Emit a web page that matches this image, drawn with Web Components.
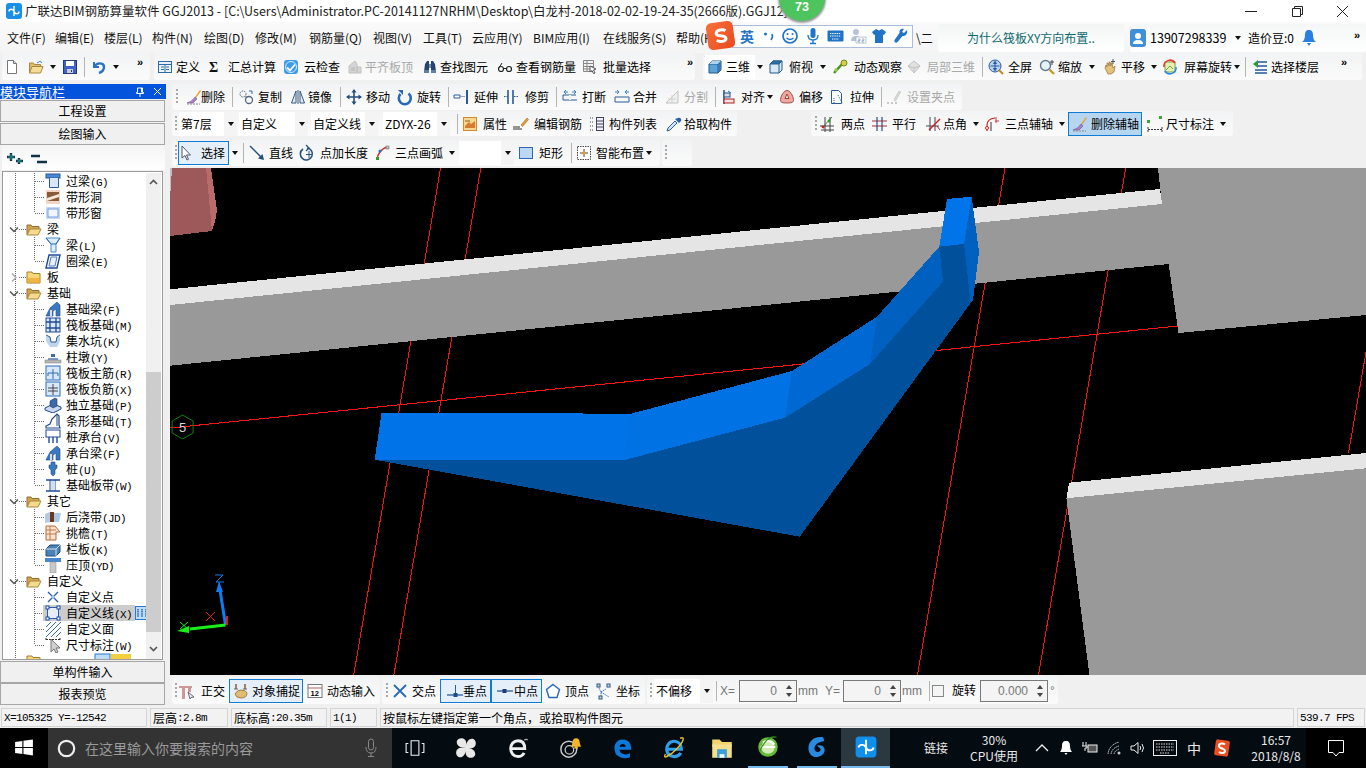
<!DOCTYPE html>
<html lang="zh"><head><meta charset="utf-8"><title>GGJ2013</title>
<style>
html,body{margin:0;padding:0;width:1366px;height:768px;overflow:hidden;background:#f0f0f0;font:12px/16px "Noto Sans CJK SC","Liberation Sans",sans-serif;color:#000}
</style></head><body><gj-app></gj-app>
<script>
const I={
new:'<path d="M3.5 1.5h6l3 3v10h-9z" fill="#fff" stroke="#777"/><path d="M9.5 1.5v3h3" fill="#ddd" stroke="#777"/>',
open:'<path d="M1.5 14v-10h4l1 1.5h6v2" fill="#dcb868" stroke="#a98a40"/><path d="M1.5 14l2.5-6.5h11L12.5 14z" fill="#f5dc98" stroke="#a98a40"/><path d="M9 4q3-3 5-.5" fill="none" stroke="#3a7fd0"/>',
save:'<rect x="1.5" y="1.5" width="13" height="13" fill="#3f62c4" stroke="#22387a"/><rect x="4" y="2" width="8" height="5" fill="#fff"/><rect x="5" y="10" width="6" height="4" fill="#c8d0e0"/><rect x="9" y="11" width="1" height="2" fill="#334"/>',
undo:'<path d="M3 3v5h5" fill="none" stroke="#2a72c8" stroke-width="2"/><path d="M3.5 7.5C6 3 13 3.500 13 8c0 3-2 5-5 6" fill="none" stroke="#2a72c8" stroke-width="2.400"/>',
def:'<rect x="1.500" y="2.500" width="13" height="11" fill="#eaf2fb" stroke="#2c6aa8"/><path d="M1.500 5.500h13M4 8h3M4 10.500h3M9 8h3M9 10.500h3M8 5.500v8" stroke="#2c6aa8" fill="none"/>',
sigma:'<text x="2" y="13" font-size="14" font-weight="700" font-family="Liberation Serif,serif" fill="#111">Σ</text>',
cloud:'<rect x="1" y="1" width="14" height="14" rx="3" fill="#3f9be8"/><path d="M4 8.500l3 3 5-6" fill="none" stroke="#fff" stroke-width="1.800"/><circle cx="8" cy="8" r="5.500" fill="none" stroke="#d8ecfb"/>',
flat:'<path d="M2 14V7l6-5 2 3v9zM10 14V8h4v6z" fill="#d0d0d0" stroke="#b8b8b8"/><path d="M4 9h4M4 11h4" stroke="#aaa"/>',
binoc:'<path d="M2 13l1-8 2-3h2v11zM9 13V2h2l2 3 1 8z" fill="#27446e"/><rect x="7" y="5" width="2" height="4" fill="#7b8ca8"/><rect x="2" y="11" width="5" height="3" fill="#5f7ea8"/><rect x="9" y="11" width="5" height="3" fill="#5f7ea8"/>',
glass:'<circle cx="4" cy="10" r="2.500" fill="none" stroke="#222" stroke-width="1.200"/><circle cx="12" cy="10" r="2.500" fill="none" stroke="#222" stroke-width="1.200"/><path d="M6 9.500h3.500M1.500 9.500L5 4" fill="none" stroke="#222"/>',
batch:'<path d="M1.500 1.500h10v11h-10zM1.500 4.500h10M1.500 7.500h10M1.500 10h10M5 1.500v11" fill="#f2f2f2" stroke="#888"/><path d="M8 7l6 3-2.500 1 1.500 3-1.500.5-1.500-3-2 1.500z" fill="#fff" stroke="#555"/>',
cube:'<path d="M2 5l3-3h9v9l-3 3H2z" fill="#5aa2d8" stroke="#235a8c"/><path d="M2 5h9v9M11 5l3-3" fill="none" stroke="#235a8c"/><path d="M2 5l3-3h9l-3 3z" fill="#a8d4f0"/><path d="M11 5l3-3v9l-3 3z" fill="#3a7ab0"/>',
top:'<path d="M2 5l3-3h9v9l-3 3H2z" fill="#d8e8f5" stroke="#235a8c"/><path d="M2 5l3-3h9l-3 3z" fill="#2f6fb0" stroke="#235a8c"/><path d="M11 5v9" stroke="#235a8c"/>',
orbit:'<path d="M2 14L11 4" stroke="#4d8f1d" stroke-width="2.500"/><circle cx="12" cy="4" r="3" fill="#d8d040" stroke="#6b8a1a"/><circle cx="4" cy="11" r="1.800" fill="#8fcf4a"/>',
local:'<path d="M2 7l6-5 6 5-6 7z" fill="#dedede" stroke="#bbb"/><path d="M2 7l6 2 6-2M8 9v5" fill="none" stroke="#bbb"/>',
full:'<circle cx="7" cy="7" r="6" fill="#b9d4ef" stroke="#2a5aa0"/><path d="M7 2.500v9M2.500 7h9M7 2.500L5.500 4.500h3zM7 11.500L5.500 9.500h3z" fill="#2a5aa0" stroke="#2a5aa0"/><path d="M11 11l4 4" stroke="#c08a20" stroke-width="2"/>',
zoom:'<circle cx="6.500" cy="6.500" r="5" fill="#e8f0fa" stroke="#607890" stroke-width="1.400"/><path d="M10.500 10.500l4.500 4.500" stroke="#c09a30" stroke-width="2.400"/><path d="M13 1v5M11 3h4" stroke="#444"/>',
pan:'<path d="M3 9l1-3 1 2V4l1 0 1 3V3l1 0 1 4V4h1l1 5 2-2-1 6-3 2H6z" fill="#e3c27a" stroke="#95703a" stroke-width=".7"/><path d="M11 0v5M9 2.500h4" stroke="#555"/>',
rot:'<rect x="3" y="3" width="10" height="10" fill="#e6f0b0" stroke="#80a060"/><path d="M4 11l4-4 3 3" fill="none" stroke="#6aa840"/><path d="M2 8a6 6 0 0 1 11-4" fill="none" stroke="#e03a2a" stroke-width="1.500"/><path d="M14 8a6 6 0 0 1-11 4" fill="none" stroke="#2a8ae0" stroke-width="1.500"/>',
floor:'<path d="M6 3h9M6 7h9M3 11h12M3 14h12" stroke="#225a9a" stroke-width="1.500"/><path d="M6 1L1 5l5 4z" fill="#2a9a3a"/>',
del:'<path d="M9 8L14 1l1 1-5 7z" fill="#e8a030"/><path d="M9 8l2 2-4 4H1q5-1 8-6z" fill="#a880c8" stroke="#705090" stroke-width=".6"/><path d="M1 15h13" stroke="#888" stroke-dasharray="2 1"/>',
copy:'<circle cx="5" cy="5" r="3" fill="none" stroke="#567" stroke-dasharray="1.500 1"/><circle cx="11" cy="11" r="3.500" fill="none" stroke="#567" stroke-width="1.300"/><path d="M7 8l2 0" stroke="#567"/><path d="M11 2h3v3" fill="none" stroke="#2a6ab0"/>',
mirror:'<path d="M1.500 14L6 2v12zM14.500 14L10 2v12z" fill="#e4ecf4" stroke="#345a80"/><path d="M8 1v14" stroke="#345a80"/>',
move:'<path d="M8 1v14M1 8h14" stroke="#23507e" stroke-width="1.600"/><path d="M8 0L5.500 3.500h5zM8 16l-2.500-3.500h5zM0 8l3.500-2.500v5zM16 8l-3.500-2.500v5z" fill="#23507e"/>',
turn:'<path d="M12.500 4.500a6 6 0 1 1-8 .5" fill="none" stroke="#2a68b8" stroke-width="2.600"/><path d="M2 1h5v5z" fill="#2a68b8"/>',
ext:'<path d="M1 6h6v3H1z" fill="#fff" stroke="#2a5a98"/><path d="M8.500 7.500h3" stroke="#2a5a98" stroke-dasharray="1 1"/><path d="M14 1v14" stroke="#2a5a98" stroke-width="2"/>',
trim:'<path d="M5 1v14M10 1v14" stroke="#2a5a98" stroke-width="1.600"/><path d="M1 7.500h4M11 7.500h4" stroke="#2a5a98" stroke-dasharray="1.500 1"/>',
brk:'<path d="M1 6h13M1 6v5h14" fill="none" stroke="#2a5a98"/><path d="M2 3h4M2 3l2-2M2 3l2 2M14 3h-4M14 3l-2-2M14 3l-2 2" fill="none" stroke="#3a80c0"/><path d="M8 6v5" stroke="#f0f0f0" stroke-width="2"/>',
mrg:'<path d="M1 8h14M1 13h14" fill="none" stroke="#2a5a98"/><path d="M1 3h4M5 3L3 1M5 3L3 5M15 3h-4M11 3l2-2M11 3l2 2" fill="none" stroke="#3a80c0"/><path d="M1 8v5M15 8v5" stroke="#2a5a98"/>',
spl:'<path d="M2 14L14 2v12z" fill="#eee" stroke="#bbb"/><path d="M4 10h8M8 6v8" stroke="#ccc"/>',
align:'<path d="M4 1v14" stroke="#23508e" stroke-width="1.500"/><rect x="4" y="4" width="6" height="4" fill="#ddd" stroke="#23508e"/><rect x="4" y="10" width="10" height="4" fill="#f4dede" stroke="#b02020"/><path d="M8 2l3 2" stroke="#2a70c0"/>',
off:'<path d="M8 1.500c3 0 6 5 6.500 9 .3 3-2 3.500-6.500 3.500s-6.800-.5-6.500-3.500C2 6.500 5 1.500 8 1.500z" fill="#eda9a0" stroke="#a04a4a"/><path d="M6 9.500L8 5l2 4.500z" fill="#fff" stroke="#b03a3a"/>',
str:'<path d="M2.500 1.500h7l3 3v10h-10z" fill="#fff" stroke="#2a5a98"/><path d="M9 6l4 8M5 14l0-6" stroke="#2a5a98" stroke-dasharray="1 1"/>',
grip:'<path d="M8 11l5-9 1.500 1-5 9z" fill="#ddd" stroke="#c0c0c0"/><path d="M1 14h2M5 14h2M9 14h2" stroke="#aaa" stroke-width="1.500"/>',
attr:'<rect x="1.500" y="1.500" width="13" height="13" fill="#f8d890" stroke="#d08a30"/><path d="M3 10l4-4 2 2 4-3v7H3z" fill="#d87a30"/><path d="M3 5h5" stroke="#806020"/>',
edit:'<path d="M8 9l6-7 1.500 1.500-6 7z" fill="#e8a030" stroke="#805a18" stroke-width=".5"/><path d="M0 11h7M0 13h9" stroke="#333" stroke-width="1.200"/>',
list:'<path d="M1 2h3M1 6h3M1 10h3M1 14h3" stroke="#444" stroke-dasharray="1 1"/><rect x="7.500" y="1.500" width="7" height="13" fill="#eef" stroke="#445"/><path d="M7.500 5h7M7.500 8h7M7.500 11h7" stroke="#445"/>',
pick:'<path d="M1 15l1-3 7-7 2 2-7 7z" fill="#cfe6fa" stroke="#2a60a8"/><path d="M9 3l4 4 2-2c1-2-1-4-3-3z" fill="#2a60a8"/>',
two:'<path d="M2 12L12 1" stroke="#3a8a2a"/><path d="M0 10h14M1 14h13M5 1v15M10 1v15" stroke="#444" /><circle cx="9" cy="5" r="1.400" fill="#2a9a2a"/><path d="M2 10l2 2" stroke="#d02020" stroke-width="2"/>',
par:'<path d="M0 5h15M0 10h15" stroke="#b02a2a" stroke-width="1.200"/><path d="M5 1v14M10 1v14" stroke="#2a4a8a" stroke-width="1.200"/>',
ang:'<path d="M0 10h13M4 1v14M9 1v14" stroke="#445" /><path d="M3 14L14 3" stroke="#d02020" stroke-width="1.500"/><path d="M11 10l3 4" stroke="#d02020"/>',
arc:'<path d="M3 15V9q0-6 8-7" fill="none" stroke="#d02020" stroke-width="1.200"/><circle cx="3" cy="12" r="1.500" fill="#fff" stroke="#d02020"/><path d="M11 5h4M12 1v6" stroke="#c04040"/><path d="M7 6v9" stroke="#333"/>',
dim:'<rect x="0" y="4" width="3" height="3" fill="#38a838"/><rect x="12" y="0" width="3" height="3" fill="#38a838"/><path d="M1 11v5M15 11v5M1 13.500h14" stroke="#333" stroke-dasharray="2 1"/>',
sel:'<path d="M4 1v12l3-2.500 2 4.500 1.500-.7-2-4.300h4z" fill="#fff" stroke="#556" />',
line:'<path d="M1 1l12 12" stroke="#24507e" stroke-width="1.500"/><path d="M15 15l-6-1.500 4.500-4.500z" fill="#24507e"/>',
pt:'<path d="M3 4a6 6 0 1 0 4-1" fill="none" stroke="#24507e" stroke-width="1.600"/><path d="M6 0l3 3-3 3" fill="none" stroke="#24507e" stroke-width="1.200"/><path d="M9 6v7M6 9.500h6" stroke="#24507e"/>',
arc3:'<path d="M2 15q1-10 10-13" fill="none" stroke="#c83030" stroke-width="1.500"/><rect x="1" y="12" width="3" height="3" fill="#2f9a2f"/><rect x="11" y="1" width="3" height="3" fill="#bbb" stroke="#666" stroke-width=".5"/><circle cx="5" cy="6" r="1.500" fill="#2f6ac0"/>',
rect:'<rect x="1.500" y="2.500" width="13" height="11" fill="#bcd6f5" stroke="#2a68b8"/>',
smart:'<path d="M1.500 1.500h13v13h-13z" fill="#fff" stroke="#444" stroke-dasharray="1.500 1"/><path d="M8 4v8M4 8h8" stroke="#444"/><circle cx="8" cy="8" r="1.800" fill="#d8a030"/>',
ortho:'<path d="M0 3h13v2H6v11H3V5H0zM9 5h3v4H9z" fill="#cf9898"/><path d="M9 9l6 5-3 .5-1 1.500z" fill="#eef" stroke="#667"/>',
snap:'<path d="M3 1v5M12 1v5" stroke="#8a5020" stroke-width="1.400"/><path d="M1 6h4M10 6h4" stroke="#666"/><path d="M2 11q2-4 6-4 5 0 6 3 0 5-6 5-5 0-6-4z" fill="#e0bd70" stroke="#8a6020" stroke-width=".7"/>',
dyn:'<rect x="1" y="1.500" width="14" height="13" fill="#fff" stroke="#777"/><path d="M1 5h14" stroke="#b06060"/><text x="3.500" y="13" font-size="7.500" font-weight="700" font-family="Liberation Sans,sans-serif" fill="#000">12</text>',
cross:'<path d="M2 2l12 12M14 2L2 14" stroke="#2a6ab8" stroke-width="1.800"/>',
perp:'<path d="M0 12h16" stroke="#2a5a98" stroke-width="1.300"/><path d="M8.500 2v10" stroke="#2a5a98"/><rect x="6.500" y="10" width="4" height="4" fill="#1e4a88"/>',
mid:'<path d="M0 8h16" stroke="#2a5a98" stroke-width="1.300"/><rect x="5.500" y="6" width="4" height="4" fill="#1e3a78"/>',
vert:'<path d="M8 1.500l6.500 5-2.500 8H4l-2.500-8z" fill="#fff" stroke="#2a68b8" stroke-width="1.400"/>',
coord:'<path d="M2 3l3 6v5M5 9l5-3M5 9l8 5" stroke="#2a6ab8" fill="none" stroke-dasharray="1.500 1"/><rect x="1" y="1" width="3" height="3" fill="#bde" stroke="#357"/><rect x="11" y="1" width="3" height="3" fill="#bde" stroke="#357"/><rect x="3" y="13" width="3" height="3" fill="#bde" stroke="#357"/>',
fo:'<path d="M1 14V4h4l1 1.500h7V8" fill="#cfa550" stroke="#8d7230"/><path d="M1 14l3-6h11l-3 6z" fill="#f5d98c" stroke="#a58a40"/>',
fc:'<path d="M1 14V3h5l1 1.500h7V14z" fill="#f6d778" stroke="#a08030"/><path d="M1 14h13V9H1z" fill="#eaa82e" opacity=".7"/>',
lintel:'<rect x="1" y="1" width="14" height="4" fill="#4a86d8" stroke="#2a5a9a"/><path d="M4.500 5v9.500h9V5" fill="#d8e8f8" stroke="#2a5a9a"/>',
hole:'<rect x="1" y="1" width="14" height="14" fill="#f1d6c8"/><rect x="2" y="3" width="12" height="9" fill="#8a5a38"/><path d="M2 9l12-4v3L2 12z" fill="#f4e8dc"/>',
win:'<rect x="1" y="2" width="14" height="12" fill="#c6d8f6"/><rect x="3" y="4" width="10" height="8" fill="#f1f6fc" stroke="#7aa0d8"/>',
beam:'<path d="M1 1h14l-4 6v8H6V7z" fill="#dcecfa" stroke="#4a8ac8"/><path d="M1 1l5 6h5l4-6" fill="none" stroke="#2a6ab0"/>',
ring:'<path d="M4 2h11l-3 13H1z" fill="#fff" stroke="#1e4a98" stroke-width="1.400"/><path d="M6 4h6l-2 9H4z" fill="#e8f1fb" stroke="#4a7ac0"/>',
fb:'<path d="M1 15l4-8 7-6 3 3v11h-4V8l-3 2v5z" fill="#3a78c0" stroke="#1e4a88" stroke-width=".6"/><path d="M5 15V9h2v6z" fill="#cfe0f5"/>',
raft:'<rect x="1" y="1" width="14" height="14" fill="#d8e8f8" stroke="#1e4a98"/><path d="M1 5h14M1 11h14M5 1v14M11 1v14" stroke="#1e4a98" stroke-width="1.300"/>',
sump:'<path d="M1 3l4 1 1 5h5l1-5 3-1v5l-3 6H5L1 8z" fill="#bcd4ee"/><path d="M1 2l4 2 1 5h5l1-5 3-2" fill="none" stroke="#2a5a98"/>',
pier:'<path d="M6 5h4v3H6z" fill="#3a6aa8"/><path d="M3 9h10v2H3z" fill="#7a9ac8"/><rect x="0" y="11" width="16" height="3" fill="#b8b8b8" stroke="#777" stroke-width=".5"/>',
rm:'<rect x="1" y="1" width="14" height="14" fill="#d8e8f8" stroke="#2a6ab8"/><path d="M8 4v10M3 8h10M3 8v3M13 8v3" stroke="#2a6ab8" fill="none"/>',
rn:'<rect x="1" y="1" width="14" height="14" fill="#d8e8f8" stroke="#2a6ab8"/><path d="M8 3v11M3 7h10M3 10h10" stroke="#444" fill="none"/>',
iso:'<path d="M0 11l8-4 8 3v2l-8 4-8-3z" fill="#c8d8ee" stroke="#1e4a88"/><path d="M5 4l5-3 2 1v7l-4 2-3-2z" fill="#3a6aa8" stroke="#1e3a78" stroke-width=".6"/>',
strip:'<path d="M1 15v-2l4-2 2-5 5-5 2 2v9l1 3z" fill="#fff" stroke="#1e4a88" stroke-width="1.200"/><path d="M12 1v12" stroke="#1e4a88"/>',
cap:'<rect x="1" y="1" width="14" height="7" fill="#fff" stroke="#1e4a98"/><path d="M4 8v6M8 8v6M12 8v6" stroke="#1e4a98" stroke-width="1.400"/>',
pile:'<path d="M6 1h4v3h2v3l-2 2v4l-2 2-2-2V9L4 7V4h2z" fill="#3a78c0" stroke="#1e4a88" stroke-width=".6"/>',
band:'<path d="M1 3h14M1 14h14" stroke="#1e4a98" stroke-width="1.300"/><path d="M5 3v11M10 3v11" stroke="#1e4a98"/><rect x="6" y="4" width="4" height="9" fill="#cfe0f5"/>',
cast:'<path d="M0 5l5-2v10l-5 1z" fill="#b8c8de"/><path d="M5 3h4v10H5z" fill="#6a3a20"/><path d="M9 4h7l-2 9H9z" fill="#a8c8ea"/>',
eave:'<path d="M1 1h9l5 6h-4v8H1z" fill="#f7e2d0" stroke="#b06a3a"/><path d="M1 5h10M1 9h10M5 1v14" stroke="#c07a4a"/>',
para:'<path d="M1 8l4-4h10v7l-4 4H1z" fill="#4a82b8" stroke="#1e4a78"/><path d="M1 8h10v7M11 8l4-4" fill="none" stroke="#cfe0f0"/>',
cope:'<rect x="0" y="1" width="16" height="4" fill="#4a86d0"/><rect x="5" y="5" width="6" height="11" fill="#c8c8c8" stroke="#888" stroke-width=".5"/>',
cpt:'<path d="M3 3l10 10M13 3L3 13" stroke="#2a5aa8" stroke-width="1.300"/><circle cx="8" cy="8" r="1.800" fill="#9ac4ee"/>',
cline:'<rect x="2.500" y="2.500" width="11" height="11" fill="#e6eef8" stroke="#2a5aa8"/><rect x="1" y="1" width="3" height="3" fill="#fff" stroke="#1e4aa0"/><rect x="12" y="1" width="3" height="3" fill="#fff" stroke="#1e4aa0"/><rect x="1" y="12" width="3" height="3" fill="#fff" stroke="#1e4aa0"/><rect x="12" y="12" width="3" height="3" fill="#fff" stroke="#1e4aa0"/>',
carea:'<path d="M1 6l5-5M1 11L11 1M1 16L16 1M6 16L16 6M11 16l5-5" stroke="#3a6ab8"/>',
cdim:'<path d="M1 1v3M15 1v3M1 2.500h14" stroke="#333" stroke-dasharray="2 1"/><path d="M6 2v13l3-3 2 4 2-1-2-4h4z" fill="#d0d0d0" stroke="#777"/>'
};
const svg=(n,s=16)=>`<svg width="${s}" height="${s}" viewBox="0 0 16 16" style="display:block;flex:none;overflow:visible">${I[n]||''}</svg>`;
const def=(n,tpl)=>{customElements.define(n,class extends HTMLElement{constructor(){super();this.attachShadow({mode:'open'}).innerHTML=typeof tpl==='function'?'':tpl}connectedCallback(){if(typeof tpl==='function'&&!this.shadowRoot.innerHTML)this.shadowRoot.innerHTML=tpl(this)}})};

def('mono-text','<style>:host{font:11px/16px "Liberation Mono",monospace;letter-spacing:-.6px}</style><slot></slot>');
def('tool-item',h=>`<style>:host{display:flex;align-items:center;box-sizing:border-box;flex:none;height:24px;white-space:nowrap;color:${h.hasAttribute('grey')?'#a8a8a8':'#000'}}
:host([hl]){background:#e4eff9;box-shadow:inset 0 0 0 1px #0f7bd4}:host([strong]){background:#b6d5f0}:host([plain]){background:#fff}
svg{${h.hasAttribute('grey')?'opacity:.85':''}}</style>${svg(h.getAttribute('icon'))}<span style="margin-left:${h.getAttribute('g')||3}px"><slot></slot></span>`);
def('tool-drop','<style>:host{display:block;flex:none;width:0;height:0;border:3.5px solid transparent;border-top:4px solid #111;border-bottom:0}</style>');
def('tool-sep','<style>:host{display:block;flex:none;width:1px;height:20px;background:#b4b4b4}</style>');
def('tool-grip','<style>:host{display:block;flex:none;width:2px;height:16px;background:repeating-linear-gradient(#a8a8a8 0 2px,transparent 2px 4px)}</style>');
def('tool-more','<style>:host{display:block;flex:none;width:8px;height:24px;font:700 11px/14px "Liberation Sans",sans-serif}</style>»');
def('tool-combo',h=>`<style>:host{display:flex;align-items:center;flex:none;box-sizing:border-box;height:24px;background:#fff;padding-left:2px;white-space:nowrap}span{flex:1}i{width:13px;height:24px;background:#f4f4f4;display:flex;align-items:center;justify-content:center}b{width:0;height:0;border:3.5px solid transparent;border-top:4px solid #111;border-bottom:0}</style><span><slot></slot></span><i><b></b></i>`);
def('tool-bar','<style>:host{display:flex;align-items:center;flex:none;box-sizing:border-box;background:linear-gradient(#f2f3f4,#fbfbfb);border-radius:3px;height:100%}</style><slot></slot>');
def('tool-row','<style>:host{display:flex;align-items:stretch;box-sizing:border-box;flex:none}</style><slot></slot>');
def('num-input',h=>`<style>:host{display:flex;align-items:center;box-sizing:border-box;flex:none;height:22px;border:1px solid #7a7a7a;background:#f4f4f4;color:#777;font:12px/20px "Liberation Sans",sans-serif;justify-content:flex-end}
i{display:flex;flex-direction:column;gap:4px;width:14px;align-items:center;margin-left:5px}b{width:0;height:0;border:3px solid transparent}b:first-child{border-bottom:4px solid #444;border-top:0}b:last-child{border-top:4px solid #444;border-bottom:0}</style><slot></slot><i><b></b><b></b></i>`);
def('plain-label','<style>:host{display:block;flex:none;white-space:nowrap;color:#777;font:12px/16px "Liberation Sans","Noto Sans CJK SC",sans-serif}</style><slot></slot>');

function bar(x0,x1,es){let c=x0,o='';
 for(const e of es){const t=e[0];
  if(t==='i'){const[,ct,tx,lb,ic,op={}]=e;const l=op.box?op.box[0]:ct-8;const w=op.box?op.box[1]-op.box[0]:(tx+[...lb].length*12)-l;
    o+=`<tool-item icon="${ic}" g="${tx-ct-8}" ${op.a||''} style="margin-left:${l-c}px;width:${w}px;padding-left:${ct-8-l}px">${lb}</tool-item>`;c=l+w}
  if(t==='a'){o+=`<tool-drop style="margin-left:${e[1]-3.5-c}px"></tool-drop>`;c=e[1]+3.5}
  if(t==='s'){o+=`<tool-sep style="margin-left:${e[1]-c}px"></tool-sep>`;c=e[1]+1}
  if(t==='h'){o+=`<tool-grip style="margin-left:${e[1]-c}px"></tool-grip>`;c=e[1]+2}
  if(t==='m'){o+=`<tool-more style="margin-left:${e[1]-c}px"></tool-more>`;c=e[1]+8}
  if(t==='c'){o+=`<tool-combo style="margin-left:${e[1]-c}px;width:${e[2]-e[1]}px">${e[3]}</tool-combo>`;c=e[2]}
  if(t==='n'){o+=`<num-input style="margin-left:${e[1]-c}px;width:${e[2]-e[1]}px">${e[3]}</num-input>`;c=e[2]}
  if(t==='l'){o+=`<plain-label style="margin-left:${e[1]-c}px;width:${e[2]-e[1]}px;${e[4]||''}">${e[3]}</plain-label>`;c=e[2]}
 }
 return [x0,x1,o]}
function row(st,h,bars,extra=''){let c=st,o='';for(const[a,b,s]of bars){o+=`<tool-bar style="margin-left:${a-c}px;width:${b-a}px">${s}</tool-bar>`;c=b}return `<tool-row style="height:${h}px;${extra}">${o}</tool-row>`}

const R1=row(0,27,[
 bar(2,150,[['i',12,20,'','new'],['i',36,44,'','open'],['a',53],['i',71,79,'','save'],['s',85],['i',100,108,'','undo'],['a',117],['m',139]]),
 bar(154,695,[['i',165,176,'定义','def'],['i',215,228,'汇总计算','sigma'],['i',291,304,'云检查','cloud'],['i',355,365,'平齐板顶','flat',{a:'grey'}],['i',430,440,'查找图元','binoc'],['i',505,516,'查看钢筋量','glass'],['i',590,603,'批量选择','batch'],['m',687]]),
 bar(703,1362,[['i',715,726,'三维','cube',{box:[705,755],a:'plain'}],['a',760],['i',777,790,'俯视','top'],['a',824],['i',842,856,'动态观察','orbit'],['i',916,929,'局部三维','local',{a:'grey'}],['s',984],['i',998,1010,'全屏','full'],['i',1049,1060,'缩放','zoom'],['a',1094],['i',1113,1124,'平移','pan'],['a',1157],['i',1174,1188,'屏幕旋转','rot'],['a',1241],['s',1250],['i',1265,1276,'选择楼层','floor'],['m',1346]])
],'margin-bottom:4px');
const R2=row(170,27,[bar(172,962,[['h',176],['i',194,201,'删除','del'],['s',232],['i',246,258,'复制','copy'],['i',298,308,'镜像','mirror'],['s',340],['i',354,366,'移动','move'],['i',404,417,'旋转','turn'],['s',448],['i',461,474,'延伸','ext'],['i',511,525,'修剪','trim'],['s',556],['i',570,582,'打断','brk'],['i',622,633,'合并','mrg'],['i',672,684,'分割','spl',{a:'grey'}],['s',715],['i',728,741,'对齐','align'],['a',770],['i',788,800,'偏移','off'],['i',838,851,'拉伸','str'],['s',882],['i',895,908,'设置夹点','grip',{a:'grey'}]])],'padding-bottom:1px');
const R3=row(170,28,[bar(172,737,[['h',175],['c',179,237,'第7层'],['c',239,308,'自定义'],['c',311,378,'自定义线'],['c',383,450,'ZDYX-26'],['s',457],['i',470,483,'属性','attr'],['i',521,534,'编辑钢筋','edit'],['i',597,609,'构件列表','list'],['i',674,684,'拾取构件','pick']]),
 bar(811,1233,[['h',815],['i',828,841,'两点','two'],['i',880,892,'平行','par'],['i',934,943,'点角','ang'],['a',976],['i',993,1006,'三点辅轴','arc'],['a',1063],['i',1082,1093,'删除辅轴','del',{box:[1070,1144],a:'hl strong'}],['i',1157,1168,'尺寸标注','dim'],['a',1225]])],'padding:0 0 3px');
const R4=row(170,29,[bar(172,660,[['h',175],['i',186,201,'选择','sel',{box:[178,229],a:'hl'}],['a',235],['s',244],['i',258,270,'直线','line'],['i',309,321,'点加长度','pt'],['i',384,396,'三点画弧','arc3'],['a',453],['c',461,516,''],['i',528,541,'矩形','rect'],['s',573],['i',586,598,'智能布置','smart'],['a',651]]),
 bar(662,692,[['h',665]])],'padding:1px 0 2px');
const R5=row(170,32,[bar(172,380,[['h',175],['i',187,201,'正交','ortho'],['i',241,252,'对象捕捉','snap',{box:[229,303],a:'hl'}],['i',315,327,'动态输入','dyn']]),
 bar(382,645,[['h',386],['i',400,412,'交点','cross'],['i',455,463,'垂点','perp',{box:[440,491],a:'hl'}],['i',505,514,'中点','mid',{box:[491,542],a:'hl'}],['i',553,565,'顶点','vert'],['i',604,616,'坐标','coord']]),
 bar(647,1058,[['h',650],['c',654,713,'不偏移'],['s',716],['l',720,738,'X='],['n',739,797,'0'],['l',798,824,'mm'],['l',825,842,'Y='],['n',843,901,'0'],['l',902,928,'mm'],['s',929],['l',932,944,'','width:10px;height:10px;border:1px solid #888;background:#f4f4f4;flex:none'],['l',952,978,'旋转','color:#000'],['n',980,1048,'0.000'],['l',1050,1056,'°']])],'padding:2px 0 3px');

def('title-bar',`<style>:host{display:flex;align-items:center;height:22px;background:#fff;flex:none;overflow:hidden;font-size:12.500px;white-space:nowrap;color:#222}
.ic{margin:0 3px 0 6px;width:16px;height:16px;border-radius:3px;background:#1a8fe6;flex:none;display:flex;align-items:center;justify-content:center}
.t{flex:none;width:772px;overflow:hidden}.w{margin-left:auto;display:flex}.w svg{display:block;width:46px;height:20px}</style>
<span class="ic"><svg width="12" height="12" viewBox="0 0 12 12"><path d="M6 1v10M1 6.500c0-3 4-3 5 0s5 3 5 0" fill="none" stroke="#fff" stroke-width="1.400"/></svg></span><span class="t"><slot></slot></span>
<span class="w"><svg viewBox="0 0 46 20"><path d="M17 10.500h12" stroke="#222"/></svg><svg viewBox="0 0 46 20"><path d="M18.500 7.500h8v8h-8zM20.500 7V5.500h8v8H27" fill="none" stroke="#222"/></svg><svg viewBox="0 0 46 20"><path d="M17 5l11 11M28 5L17 16" stroke="#222"/></svg></span>`);
def('menu-item','<style>:host{display:block;flex:none;white-space:nowrap;color:#111}</style><slot></slot>');
def('notice-box','<style>:host{display:flex;align-items:center;justify-content:center;flex:none;height:28px;box-sizing:border-box;color:#0f6a6e;background:linear-gradient(#f3f5f5,#fff);border-radius:3px}</style><slot></slot>');
def('user-box',`<style>:host{display:flex;align-items:center;flex:none;white-space:nowrap;height:28px;background:linear-gradient(#f5f6f6,#fff);border-radius:3px}
.a{width:16px;height:18px;background:#3f90d8;border-radius:3px;margin:0 4px 0 0}.a svg{display:block}.n{font-size:12.500px;width:78px}
.d{width:0;height:0;border:3.500px solid transparent;border-top:4px solid #111;border-bottom:0;margin:0 7px}
.m{margin-left:auto;margin-right:6px;font:700 11px/14px "Liberation Sans",sans-serif;align-self:flex-start;margin-top:4px}</style>
<span class="a"><svg width="16" height="18" viewBox="0 0 16 18"><circle cx="8" cy="7" r="3" fill="#fff"/><path d="M3 15q0-4 5-4t5 4z" fill="#fff"/></svg></span><span class="n">13907298339</span><span class="d"></span><span style="width:52px">造价豆:0</span>
<svg width="18" height="20" viewBox="0 0 18 20"><path d="M9 2c3 0 4 2 4 5s1 6 3 7H2c2-1 3-4 3-7s1-5 4-5z" fill="#2a80e0"/><path d="M7 15h4l-2 3z" fill="#2a80e0"/></svg><span class="m">»</span>`);
def('menu-bar','<style>:host{display:flex;align-items:center;flex:none;height:31px;background:linear-gradient(#fafafa,#f4f4f4)}</style><slot></slot>');
const ml=[[7,'文件(F)'],[55,'编辑(E)'],[104,'楼层(L)'],[152,'构件(N)'],[204,'绘图(D)'],[255,'修改(M)'],[309,'钢筋量(Q)'],[373,'视图(V)'],[423,'工具(T)'],[472,'云应用(Y)'],[533,'BIM应用(I)'],[603,'在线服务(S)'],[676,'帮助(H)'],[916,'\\二']];
let menu='';ml.forEach((m,i)=>{const nx=i<ml.length-1?ml[i+1][0]:938;menu+=`<menu-item style="width:${nx-m[0]}px;${i==0?'margin-left:7px':''}">${m[1]}</menu-item>`});

def('score-badge','<style>:host{position:absolute;left:779px;top:-25px;width:46px;height:46px;border-radius:50%;background:#4dc45e;box-shadow:0 1px 2px 1px #9b9b9b;color:#fff;font:700 12.500px/14px "Liberation Sans",sans-serif;text-align:center;box-sizing:border-box;padding-top:25px;z-index:3}</style><slot></slot>');
def('ime-bar',`<style>:host{position:absolute;left:707px;top:22px;height:27px;width:206px;display:flex;align-items:center;z-index:4}
.s{width:27px;height:27px;transform:rotate(-8deg);background:linear-gradient(135deg,#f8703a,#e84a1e);border-radius:5px;flex:none;z-index:1;display:flex;align-items:center;justify-content:center}
.b{flex:none;margin-left:-2px;height:23px;width:181px;box-sizing:border-box;border:1px solid #a9bcd8;background:#fff;display:flex;align-items:center;padding-left:7px;color:#1f74c8;font:700 14px/20px "Noto Sans CJK SC",sans-serif;margin-top:1px}
.b svg{flex:none;display:block}</style><span class="s"><svg width="18" height="18" viewBox="0 0 18 18"><path d="M14 4.500C12 2.500 5 2 4.500 6c-.3 3.500 9 2 9 6-.3 3.500-7 3-9.500 1" fill="none" stroke="#fff" stroke-width="3"/></svg></span>
<span class="b"><span style="width:17px"><slot></slot></span>
<svg style="margin-left:6px" width="12" height="14" viewBox="0 0 12 14"><circle cx="2.500" cy="5" r="1.500" fill="#1f74c8"/><path d="M9 5c1 2.500.5 4-1 6" fill="none" stroke="#1f74c8" stroke-width="1.600"/></svg>
<svg style="margin-left:6px" width="18" height="18" viewBox="0 0 18 18"><circle cx="9" cy="9" r="7" fill="none" stroke="#1f74c8" stroke-width="1.700"/><circle cx="6.500" cy="7" r="1" fill="#1f74c8"/><circle cx="11.500" cy="7" r="1" fill="#1f74c8"/><path d="M5.500 11q3.500 3 7 0" fill="none" stroke="#1f74c8" stroke-width="1.400"/></svg>
<svg style="margin-left:7px" width="14" height="18" viewBox="0 0 14 18"><rect x="4.500" y="1" width="5" height="10" rx="2.500" fill="#1f74c8"/><path d="M2 8q0 5 5 5t5-5M7 13v3M4 16.500h6" fill="none" stroke="#1f74c8" stroke-width="1.400"/></svg>
<svg style="margin-left:7px" width="17" height="14" viewBox="0 0 17 14"><rect x=".5" y="1.500" width="16" height="11" rx="1" fill="#1f74c8"/><path d="M3 4.500h11M3 7h11M5 10h7" stroke="#fff" stroke-dasharray="1.400 .8"/></svg>
<svg style="margin-left:6px" width="17" height="16" viewBox="0 0 17 16"><circle cx="6" cy="4" r="3" fill="#b4c4d8"/><path d="M1 13q0-5 5-5t4 5z" fill="#b4c4d8"/><rect x="6" y="9" width="10" height="6" fill="#fff" stroke="#9aacc4" stroke-width=".7"/><path d="M8 11h2v1.500H8V14h2M12 11h2v1.500h-2V14h2" fill="none" stroke="#7f94b0" stroke-width=".7"/></svg>
<svg style="margin-left:4px" width="16" height="16" viewBox="0 0 16 16"><path d="M5 1l3 1.500L11 1l4 3-2 3-1-.5V15H4V6.500L3 7 1 4z" fill="#1f74c8"/></svg>
<svg style="margin-left:6px" width="16" height="18" viewBox="0 0 16 18"><path d="M14 3l-3 3-2-1 2-3C8 1 6 3 6.500 6L1.500 13c-.8 2 1.500 3.700 3 2L9.500 9c3 .5 5.500-2.500 4.500-6z" fill="#1f74c8"/></svg></span>`);

def('nav-header',`<style>:host{display:flex;align-items:center;height:15px;background:#0453dc;color:#fff;font-size:13px;line-height:15px;flex:none;width:166px;white-space:nowrap}
.r{margin-left:auto;display:flex;gap:8px;padding-right:4px;align-items:center}</style><slot></slot><span class="r"><svg width="10" height="10" viewBox="0 0 10 10"><path d="M2.500 1h5v4.500h1V6.500H1.500V5.500h1zM5 6.500V10M6.500 1v4.500" stroke="#fff" fill="none"/></svg><svg width="9" height="9" viewBox="0 0 9 9"><path d="M1 1l7 7M8 1L1 8" stroke="#fff"/></svg></span>`);
def('nav-button','<style>:host{display:flex;align-items:center;justify-content:center;flex:none;height:22px;box-sizing:border-box;width:165px;border:1px solid #a6a6a6;background:#f0f0f0;margin-bottom:0}</style><slot></slot>');
def('nav-tools',`<style>:host{display:flex;align-items:center;flex:none;height:25px;width:163px;box-sizing:border-box;margin-left:2px;background:linear-gradient(#f4f4f4,#fff);gap:5px;padding-left:5px}</style>
<svg width="18" height="14" viewBox="0 0 18 14"><path d="M4 2v8M0 6h8M12 7v6M9 10h7" stroke="#134" stroke-width="2.400"/><path d="M4 3v6M1 6h6M12 8v4M10 10h5" stroke="#2aa" stroke-width=".8"/></svg><svg width="18" height="14" viewBox="0 0 18 14"><path d="M1 5h9M7 11h10" stroke="#134" stroke-width="2.400"/></svg>`);
def('tree-row',h=>{const k=h.getAttribute('k')||'c',ic=h.getAttribute('icon'),lv=+(h.getAttribute('lv')||2),last=h.hasAttribute('last'),sel=h.hasAttribute('sel');
 const dot='stroke="#6a6a6a" stroke-dasharray="1 1" fill="none"';
 let g=`<path d="M12.500 0v16" ${dot}/>`;
 if(lv==2){g+=`<path d="M31.500 0V${last?8:16}M32 8.500h9" ${dot}/>`+(sel?'<rect x="40" y="0" width="23" height="16" fill="#ccc"/>':'')+`<g transform="translate(42,0)">${I[ic]}</g>`}
 else{g+=`<path d="M16 8.500h7" ${dot}/><path d="${k=='c'?'M9 4.500l4 4-4 4':'M7 6.500l4 4 4-4'}" fill="none" stroke="${k=='c'?'#aaa':'#555'}" stroke-width="1.500"/><g transform="translate(23,0)">${I[ic]}</g>`}
 return `<style>:host{display:flex;align-items:center;flex:none;height:16px;white-space:nowrap;overflow:hidden}svg{display:block;flex:none}
 .t{${sel?'background:#ccc;':''}margin-left:0;padding-right:3px;height:16px;display:block}.x{flex:none}</style>
 <svg width="${lv==2?63:44}" height="16" viewBox="0 0 ${lv==2?63:44} 16">${g}</svg><span class="t"><slot></slot></span>${sel?'<svg width="14" height="14" viewBox="0 0 14 14"><rect x=".5" y=".5" width="13" height="13" fill="#bcdcf8" stroke="#2a7ac8"/><path d="M3 3v8M7 3v8M11 3v8" stroke="#2a6ab8" stroke-width="1.600" stroke-dasharray="1.500 .6"/></svg>':''}`});
def('tree-stub',`<style>:host{display:flex;flex:none;height:16px;overflow:hidden}</style><svg width="143" height="16" viewBox="0 0 143 16"><path d="M12.500 0v8" stroke="#6a6a6a" stroke-dasharray="1 1"/><g transform="translate(23,0)">${I.fc}</g><rect x="92" y="1" width="15" height="14" fill="#bcdcf8" stroke="#2a7ac8"/><rect x="108" y="1" width="20" height="14" fill="#f2d040"/></svg>`);
def('scroll-track',`<style>:host{display:flex;flex-direction:column;flex:none;width:15px;height:100%;background:#f0f0f0}
.b{flex:none;height:17px;display:flex;align-items:center;justify-content:center}.th{flex:none;background:#cdcdcd;height:260px;margin-top:182px}</style>
<span class="b"><svg width="9" height="6" viewBox="0 0 9 6"><path d="M1 5l3.500-3.500L8 5" fill="none" stroke="#555" stroke-width="1.600"/></svg></span><span class="th"></span><span style="flex:1"></span>
<span class="b" style="height:20px"><svg width="9" height="6" viewBox="0 0 9 6"><path d="M1 1l3.500 3.500L8 1" fill="none" stroke="#555" stroke-width="1.600"/></svg></span>`);
def('tree-box','<style>:host{display:flex;flex:none;box-sizing:border-box;width:161px;height:489px;margin:1px 0 1px 2px;border:1px solid #9c9c9c;background:#fff;overflow:hidden;padding:1px 1px 0 0}.r{width:143px;flex:none;display:flex;flex-direction:column;overflow:hidden}</style><div class="r"><slot></slot></div><slot name="s"></slot>');
def('nav-panel','<style>:host{display:flex;flex-direction:column;flex:none;width:170px;height:623px;background:#f0f0f0;box-sizing:border-box}</style><slot></slot>');
const m=s=>`<mono-text>${s}</mono-text>`;
const tree=[['lintel','过梁',m('(G)')],['hole','带形洞'],['win','带形窗',0,1],
 ['fo','梁',0,0,1,'o'],['beam','梁',m('(L)')],['ring','圈梁',m('(E)'),1],
 ['fc','板',0,0,1,'c'],['fo','基础',0,0,1,'o'],
 ['fb','基础梁',m('(F)')],['raft','筏板基础',m('(M)')],['sump','集水坑',m('(K)')],['pier','柱墩',m('(Y)')],['rm','筏板主筋',m('(R)')],['rn','筏板负筋',m('(X)')],['iso','独立基础',m('(P)')],['strip','条形基础',m('(T)')],['cap','桩承台',m('(V)')],['fb','承台梁',m('(F)')],['pile','桩',m('(U)')],['band','基础板带',m('(W)'),1],
 ['fo','其它',0,0,1,'o'],['cast','后浇带',m('(JD)')],['eave','挑檐',m('(T)')],['para','栏板',m('(K)')],['cope','压顶',m('(YD)'),1],
 ['fo','自定义',0,0,1,'o'],['cpt','自定义点'],['cline','自定义线',m('(X)'),0,0,0,1],['carea','自定义面'],['cdim','尺寸标注',m('(W)'),1]];
const treeHTML=tree.map(t=>{const[ic,a,b,last,f,k,sel]=t;return `<tree-row icon="${ic}" lv="${f?1:2}" ${k?`k="${k}"`:''} ${last?'last':''} ${sel?'sel':''}>${a}${b||''}</tree-row>`}).join('')+'<tree-stub></tree-stub>';

def('model-canvas',`<style>:host{display:block;flex:none;width:1196px;height:507px;background:#000;overflow:hidden}svg{display:block}text{font:13px "Liberation Sans",sans-serif}</style>
<svg width="1196" height="507" viewBox="170 168 1196 507" shape-rendering="crispEdges">
<g stroke="#ff1414" fill="none" stroke-width="1">
<path d="M440.600 168L353.700 675M480.800 168L393.900 675M1005 168L917.500 675M1125.700 168L1038.500 675M1366 352L1348.500 453M170 428L1178 326"/></g>
<path d="M170 168h3v17l-3 14z" fill="#bfbfbf"/><path d="M172 168H206L212 231L170 236V199z" fill="#9d5959"/><path d="M206 168h5l6 42-2 12-3 9z" fill="#b96b6b"/>
<path d="M170 289.300L1160 189L1162 204L170 305z" fill="#e5e5e5"/>
<path d="M170 305L1162 204L1158 168H1366V315L1178.500 333L1168.600 264L170 365.700z" fill="#999"/>
<path d="M1069 482.700L1366 453V468.300L1066.400 498.300z" fill="#e5e5e5"/>
<path d="M1066.400 498.300L1366 468.300V675H1089.400z" fill="#999"/>
<path d="M374.700 459.700L623.500 460.300L785 417.700L870 364L943 281.700L939.300 246.700L964 244L970.700 303L799.700 536.700z" fill="#00509c"/>
<path d="M381.600 412.700L631 413.700L623.500 460.300L374.700 459.700z" fill="#0073e8"/>
<path d="M631 413.700L792 371L785 417.700L623.500 460.300z" fill="#0072e4"/>
<path d="M792 371L877 316.700L870 364L785 417.700z" fill="#0068d2"/>
<path d="M877 316.700L939.300 246.700L943 281.700L870 364z" fill="#0060c0"/>
<path d="M947 199L971.700 196.700L964 244L939.300 246.700z" fill="#0074e8"/>
<path d="M971.700 196.700L979 252L973 300L970.700 303L964 244z" fill="#0060bf"/>
<g shape-rendering="auto"><path d="M225.500 625L220 590" stroke="#0c7cf0" stroke-width="3"/><path d="M219 581l-3 11h7z" fill="#0c7cf0"/><path d="M215 575h8l-7 7h8" fill="none" stroke="#0c7cf0"/>
<path d="M225.500 625L190 629" stroke="#18f018" stroke-width="3"/><path d="M177 631l12-5v7z" fill="#18f018"/><path d="M180 622l8 7M188 622l-8 7" stroke="#18f018"/>
<path d="M206 612l9 9M215 612l-9 9" stroke="#e81818"/><path d="M227 616v9" stroke="#e81818" stroke-width="2"/>
<path d="M182.600 415l10.500 6v12l-10.500 6-10.500-6v-12z" fill="none" stroke="#128012"/></g>
<text x="179" y="432" fill="#d8d8d8" shape-rendering="auto">5</text></svg>`);

def('status-cell','<style>:host{display:flex;align-items:center;flex:none;box-sizing:border-box;height:19px;border:1px solid #d4d4d4;background:#f2f2f2;padding-left:2px;white-space:nowrap;overflow:hidden;margin-right:3px}</style><slot></slot>');
def('status-bar','<style>:host{display:flex;align-items:center;flex:none;height:21px;background:#f0f0f0;padding-left:1px}</style><slot></slot>');
const T={
win:'<path d="M1 3.500L7.500 2.600V8H1zM8.500 2.500L17 1.300V8H8.500zM1 9h6.500v5.400L1 13.500zM8.500 9H17v6.700l-8.500-1.200z" fill="#fff"/>',
view:'<path d="M5.500 2.500h7v13h-7zM3 5H1v8h2M15 5h2v8h-2" fill="none" stroke="#eee"/>',
fan:'<path d="M9 9C3 9 1 6 1.500 3.500S6 0 8 2s1 5 1 7zM9 9c0-6 3-8 5.500-7.500S18 6 16 8s-5 1-7 1zM9 9c6 0 8 3 7.500 5.500S12 18 10 16s-1-5-1-7zM9 9c0 6-3 8-5.500 7.500S0 12 2 10s5-1 7-1z" fill="#e8e8e8"/>',
ew:'<path d="M3.500 9.500h11c0-4-2-6.500-5.500-6.500S3 6 3 9.500 5.500 16 9 16c2.500 0 4-1 5-3" fill="none" stroke="#eee" stroke-width="2.400"/><path d="M14 2.500q2-1 3 0" stroke="#aaa" fill="none"/>',
sp:'<circle cx="8" cy="10" r="6.500" fill="none" stroke="#c8c8c8" stroke-width="1.200"/><circle cx="8.500" cy="10.500" r="3.500" fill="none" stroke="#c8c8c8"/><path d="M14 1c2 0 3 1.500 3 4l1 3h-8l1-3c0-2.500 1-4 3-4z" fill="#f2b428"/><rect x="12.500" y="8" width="3" height="1.500" fill="#f2b428"/>',
edge:'<path d="M3 10.500C2 6 5 2 9.500 2 14 2 17 5 16.500 10.500H7c0 3.500 5 5 8.500 2.500v3.500C10 19 3 16 3 10.500z" fill="#0c78d8"/><path d="M7 8h5c0-3-4.500-3-5 0z" fill="#000"/>',
ie:'<path d="M4 10h11c0-4-2.500-6.500-6-6.500S2.500 7 3 10.500 6 16 9.500 16c2.500 0 4-1 5-3" fill="none" stroke="#2ea0ec" stroke-width="2.600"/><path d="M2 14C-1 19 6 15 11 10s8-11 3-9" fill="none" stroke="#e8c02a" stroke-width="1.200"/>',
folder:'<path d="M1 2h6l2 2h8v4H1z" fill="#f3d36b"/><path d="M1 6h16v11H1z" fill="#f7e08c"/><path d="M5 10h8v7H5z" fill="#39a0dc"/><path d="M7 14h4v3H7z" fill="#f0f8ff"/>',
gie:'<circle cx="9" cy="9" r="8" fill="#66bb38"/><circle cx="9" cy="9" r="5.500" fill="#d0ecb4"/><path d="M3 9h12M5 5.500C8 3 13 4 14 7" fill="none" stroke="#fff" stroke-width="1.800"/><path d="M2 13q6-14 14-12" stroke="#3a8a20" fill="none"/>',
g:'<path d="M14 1C7 0 2 4 2 10c0 5 4 8 8 7 4-1 6-4 5-7-1-2-3-3-6-2 1 1 2 1 3 3 0 2-3 3-4.500 1C6 10 7 5 15 4z" fill="#2a8ae0"/>',
app:'<rect x=".5" y=".5" width="17" height="17" rx="3" fill="#0e90ec"/><path d="M9 3v12M3 9.500c0-3 5-3 6 0s6 3 6 0" fill="none" stroke="#fff" stroke-width="1.600"/>',
};
const ts=(n,s=20)=>`<svg width="${s}" height="${s}" viewBox="0 0 18 18" style="display:block;overflow:visible">${T[n]}</svg>`;
def('task-icon',h=>`<style>:host{display:flex;align-items:center;justify-content:center;flex:none;height:40px;box-sizing:border-box}
:host([run]){border-bottom:2px solid #76b9ed}:host([on]){background:#2c3840}</style>${ts(h.getAttribute('n'),+(h.getAttribute('s')||22))}`);
def('tray-icon','<style>:host{display:flex;align-items:center;justify-content:center;flex:none;color:#fff}</style><slot></slot>');
def('tray-text','<style>:host{display:block;flex:none;text-align:center;color:#e8e8e8;line-height:16px;white-space:nowrap}</style><slot></slot>');
def('search-box',`<style>:host{display:flex;align-items:center;flex:none;width:344px;height:40px;background:#333;color:#9a9a9a;font-size:14px;box-sizing:border-box}svg{display:block;flex:none}</style>
<svg style="margin:0 9px" width="19" height="19" viewBox="0 0 19 19"><circle cx="9.500" cy="9.500" r="7.700" fill="none" stroke="#eee" stroke-width="2.200"/></svg><span style="width:168px;white-space:nowrap"><slot></slot></span>
<svg style="margin-left:111px" width="14" height="20" viewBox="0 0 14 20"><rect x="4.500" y="1" width="5" height="11" rx="2.500" fill="none" stroke="#888"/><path d="M2 9q0 6 5 6t5-6M7 15v3M4 18.500h6" fill="none" stroke="#888"/></svg>`);
def('task-bar','<style>:host{display:flex;align-items:center;flex:none;height:40px;background:#040c12;overflow:hidden}</style><slot></slot>');

def('gj-app',`<style>:host{display:flex;flex-direction:column;width:1366px;height:768px;overflow:hidden;position:relative;background:#f0f0f0}
.main{display:flex;flex:none;height:623px}.right{display:flex;flex-direction:column;flex:none;width:1196px}</style>
<title-bar>广联达BIM钢筋算量软件 GGJ2013 - [C:\\Users\\Administrator.PC-20141127NRHM\\Desktop\\白龙村-2018-02-02-19-24-35(2666版).GGJ12]</title-bar>
<menu-bar>${menu}<notice-box style="width:186px">为什么筏板XY方向布置..</notice-box><user-box style="margin-left:6px;width:236px">&nbsp;</user-box></menu-bar>
${R1}
<div class="main"><nav-panel><nav-header>模块导航栏</nav-header><nav-button style="margin-top:1px">工程设置</nav-button><nav-button style="margin-top:1px">绘图输入</nav-button><nav-tools></nav-tools>
<tree-box>${treeHTML}<scroll-track slot="s"></scroll-track></tree-box>
<nav-button>单构件输入</nav-button><nav-button>报表预览</nav-button></nav-panel>
<div class="right">${R2}${R3}${R4}<model-canvas></model-canvas>${R5}</div></div>
<status-bar><status-cell style="width:146px">${m('X=105325 Y=-12542')}</status-cell><status-cell style="width:78px">层高${m(':2.8m')}</status-cell><status-cell style="width:96px;margin-right:3px">底标高${m(':20.35m')}</status-cell><status-cell style="width:47px">${m('1(1)')}</status-cell><status-cell style="width:914px;margin-right:3px">按鼠标左键指定第一个角点，或拾取构件图元</status-cell><status-cell style="width:68px;margin-right:0">${m('539.7 FPS')}</status-cell></status-bar>
<task-bar><task-icon n="win" s="20" style="width:48px;background:#000"></task-icon><search-box>在这里输入你要搜索的内容</search-box>
<task-icon n="view" s="20" style="width:46px"></task-icon><task-icon n="fan" style="width:52px;margin-left:2px"></task-icon><task-icon n="ew" style="width:52px"></task-icon><task-icon n="sp" style="width:52px"></task-icon><task-icon n="edge" style="width:52px"></task-icon><task-icon n="ie" style="width:52px"></task-icon><task-icon n="folder" style="width:44px"></task-icon>
<task-icon n="gie" run style="width:40px;margin-left:4px"></task-icon><task-icon n="g" run style="width:40px;margin-left:9px"></task-icon><task-icon n="app" run on style="width:49px;margin-left:4px"></task-icon>
<tray-text style="margin-left:32px;width:28px">链接</tray-text><tray-text style="margin-left:14px;width:60px">30%<br>CPU使用</tray-text>
<tray-icon style="margin-left:10px;width:16px"><svg width="14" height="10" viewBox="0 0 14 10"><path d="M1 8l6-6 6 6" fill="none" stroke="#eee" stroke-width="1.300"/></svg></tray-icon>
<tray-icon style="margin-left:8px;width:16px"><svg width="14" height="16" viewBox="0 0 14 16"><path d="M7 1c3 0 4 2 4 5s1 5 2 6H1c1-1 2-3 2-6s1-5 4-5zM5.500 13h3L7 15z" fill="#fff"/></svg></tray-icon>
<tray-icon style="margin-left:8px;width:16px"><svg width="16" height="14" viewBox="0 0 16 14"><path d="M1 1v4M4 1v4M0 5h5v2H3v3" stroke="#eee" fill="none"/><rect x="6" y="4" width="9" height="7" fill="#555" stroke="#eee"/></svg></tray-icon>
<tray-icon style="margin-left:9px;width:16px"><svg width="16" height="16" viewBox="0 0 16 16"><path d="M1 14Q2 5 12 2M4 14q1-6 8-8M7 14q.5-3 5-5" fill="none" stroke="#ccc" stroke-dasharray="1.500 .6"/><circle cx="12" cy="13" r="1.500" fill="#ccc"/></svg></tray-icon>
<tray-icon style="margin-left:7px;width:16px"><svg width="16" height="16" viewBox="0 0 16 16"><path d="M1 6h3l4-3.500v11L4 10H1z" fill="none" stroke="#eee"/><path d="M10 6q1.500 2 0 4M12 4q3 4 0 8" fill="none" stroke="#eee"/></svg></tray-icon>
<tray-icon style="margin-left:7px;width:24px"><svg width="24" height="16" viewBox="0 0 24 16"><rect x=".5" y=".5" width="23" height="15" fill="none" stroke="#eee"/><path d="M3 4h18M3 7h18M3 10h18M7 13h10" stroke="#ddd" stroke-dasharray="1.500 1"/></svg></tray-icon>
<tray-text style="margin-left:10px;width:14px;font-size:14px">中</tray-text>
<tray-icon style="margin-left:13px;width:16px"><svg width="16" height="18" viewBox="0 0 16 18"><rect x="1" y="1" width="14" height="16" rx="2" fill="#ea4f20" transform="rotate(8 8 9)"/><path d="M11 5.500C9 4 5 4 5 7s6 2 6 5c0 2.500-4 2.500-6 1" fill="none" stroke="#fff" stroke-width="2"/></svg></tray-icon>
<tray-text style="margin-left:16px;width:60px">16:57<br>2018/8/8</tray-text>
<div style="flex:none;width:60px;height:40px;background:#000;display:flex;align-items:center;justify-content:center"><svg width="16" height="17" viewBox="0 0 16 17"><path d="M.5 .5h15v12h-4.500L8 16 5 12.500H.5z" fill="none" stroke="#fff"/></svg></div></task-bar>
<score-badge>73</score-badge><ime-bar>英</ime-bar>`);
</script></body></html>
